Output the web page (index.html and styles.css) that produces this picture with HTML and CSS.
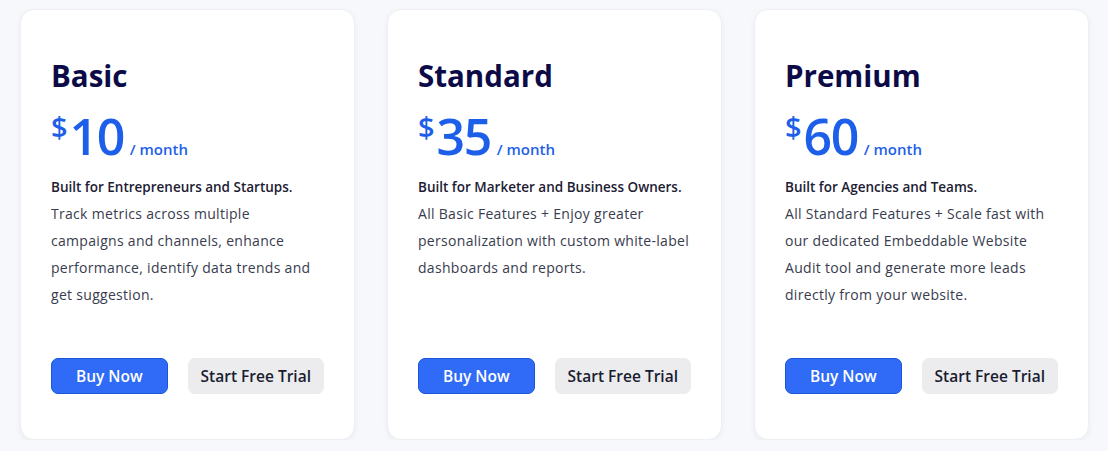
FILE: index.html
```html
<!DOCTYPE html>
<html lang="en">
<head>
    <meta charset="UTF-8">
    <meta name="viewport" content="width=device-width, initial-scale=1.0">
    <title>Pricing</title>
    <link rel="stylesheet" href="styles.css">
</head>
<body>
    <div class="plans">
        <div class="plan">
            <h2>Basic</h2>
            <div class="price"><span class="cur">$</span><span class="amount">10</span><span class="per">/ month</span></div>
            <p class="lead">Built for Entrepreneurs and Startups.</p>
            <p class="desc">Track metrics across multiple campaigns and channels, enhance performance, identify data trends and get suggestion.</p>
            <div class="actions">
                <button class="buy">Buy Now</button>
                <button class="trial">Start Free Trial</button>
            </div>
        </div>
        <div class="plan">
            <h2>Standard</h2>
            <div class="price"><span class="cur">$</span><span class="amount">35</span><span class="per">/ month</span></div>
            <p class="lead">Built for Marketer and Business Owners.</p>
            <p class="desc">All Basic Features + Enjoy greater personalization with custom white-label dashboards and reports.</p>
            <div class="actions">
                <button class="buy">Buy Now</button>
                <button class="trial">Start Free Trial</button>
            </div>
        </div>
        <div class="plan">
            <h2>Premium</h2>
            <div class="price"><span class="cur">$</span><span class="amount">60</span><span class="per">/ month</span></div>
            <p class="lead">Built for Agencies and Teams.</p>
            <p class="desc">All Standard Features + Scale fast with our dedicated Embeddable Website Audit tool and generate more leads directly from your website.</p>
            <div class="actions">
                <button class="buy">Buy Now</button>
                <button class="trial">Start Free Trial</button>
            </div>
        </div>
    </div>
</body>
</html>
```

FILE: styles.css
```css
body {
    margin: 0;
    font-family: "Open Sans", "Noto Sans", sans-serif;
    background-color: #f6f8fb;
}
.plans {
    display: grid;
    grid-template-columns: repeat(3, 335px);
    gap: 32px;
    padding: 9px 20px 0;
}
.plan {
    display: flex;
    flex-direction: column;
    height: 431px;
    box-sizing: border-box;
    padding: 50px 30px 45px;
    background-color: #fff;
    border: 1px solid #eceff3;
    border-radius: 14px;
    box-shadow: 0 2px 6px rgba(20, 30, 60, 0.05);
}
h2 {
    margin: 0;
    font-size: 29.5px;
    line-height: 32px;
    font-weight: 700;
    color: #0c0b48;
}
.price {
    display: flex;
    align-items: baseline;
    margin-top: 16px;
    color: #1e5fe9;
    height: 54px;
}
.cur {
    font-size: 29px;
    font-weight: 600;
    align-self: flex-start;
    margin-top: -1px;
    margin-right: 2px;
}
.amount {
    font-size: 50px;
    font-weight: 600;
    line-height: 56px;
    letter-spacing: -1.5px;
}
.per {
    margin-left: 6px;
    font-size: 15px;
    font-weight: 600;
}
.lead {
    margin: 14px 0 0;
    font-size: 13.5px;
    font-weight: 600;
    color: #1d2033;
    line-height: 22px;
}
.desc {
    margin: 2px 0 0;
    font-size: 14px;
    line-height: 27px;
    letter-spacing: 0.3px;
    color: #383c4e;
}
.actions {
    display: flex;
    gap: 20px;
    margin-top: auto;
}
button {
    font-family: inherit;
    font-size: 15.5px;
    font-weight: 600;
    height: 36px;
    border-radius: 7px;
    cursor: pointer;
}
.buy {
    width: 117px;
    color: #fff;
    background-color: #2f6bf6;
    border: 1px solid #1b55d8;
}
.trial {
    width: 137px;
    color: #1a1d30;
    background-color: #ececee;
    border: none;
}
```
